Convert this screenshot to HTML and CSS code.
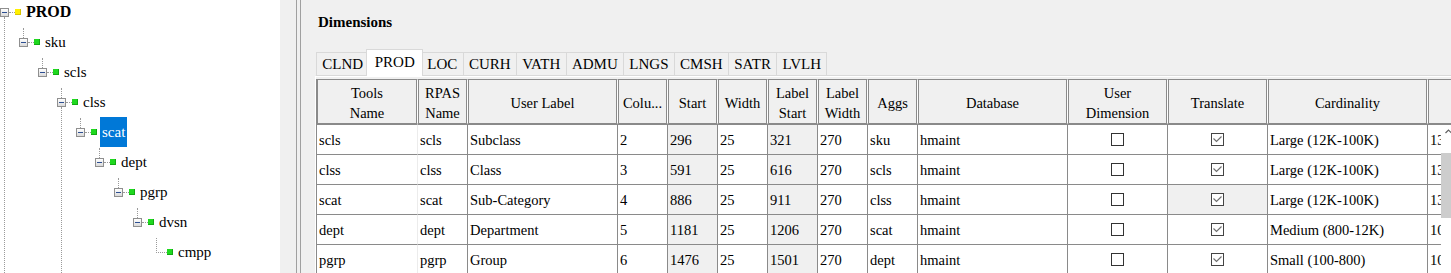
FILE: index.html
```html
<!DOCTYPE html>
<html lang="en">
<head>
  <meta charset="UTF-8" />
  <title>Dimensions</title>
  <link rel="stylesheet" href="styles.css">
</head>
<body>

<div class="tree">
  <div class="node l0 more root"><span class="box"><i></i></span><span class="icon"></span><span class="label">PROD</span></div>
  <div class="node l1"><span class="box"><i></i></span><span class="icon"></span><span class="label">sku</span></div>
  <div class="node l2"><span class="box"><i></i></span><span class="icon"></span><span class="label">scls</span></div>
  <div class="node l3 more"><span class="box"><i></i></span><span class="icon"></span><span class="label">clss</span></div>
  <div class="node l4"><span class="box"><i></i></span><span class="icon"></span><span class="label selected">scat</span></div>
  <div class="node l5"><span class="box"><i></i></span><span class="icon"></span><span class="label">dept</span></div>
  <div class="node l6"><span class="box"><i></i></span><span class="icon"></span><span class="label">pgrp</span></div>
  <div class="node l7"><span class="box"><i></i></span><span class="icon"></span><span class="label">dvsn</span></div>
  <div class="node l8 leaf"><span class="icon"></span><span class="label">cmpp</span></div>
</div>

<div class="main">
  <div class="panel">
    <h3 class="title">Dimensions</h3>

    <div class="tabs">
      <div class="tab">CLND</div>
      <div class="tab active">PROD</div>
      <div class="tab">LOC</div>
      <div class="tab">CURH</div>
      <div class="tab">VATH</div>
      <div class="tab">ADMU</div>
      <div class="tab">LNGS</div>
      <div class="tab">CMSH</div>
      <div class="tab">SATR</div>
      <div class="tab">LVLH</div>
    </div>

    <div class="tab-body">
      <div class="grid">
        <table>
          <colgroup>
            <col class="c-first">
            <col class="c-50">
            <col class="c-150">
            <col class="c-50">
            <col class="c-50">
            <col class="c-50">
            <col class="c-50">
            <col class="c-50">
            <col class="c-50">
            <col class="c-150">
            <col class="c-100">
            <col class="c-100">
            <col class="c-160">
            <col class="c-150">
          </colgroup>
          <thead>
            <tr>
              <th>Tools<br>Name</th>
              <th>RPAS<br>Name</th>
              <th>User Label</th>
              <th>Colu...</th>
              <th>Start</th>
              <th>Width</th>
              <th>Label<br>Start</th>
              <th>Label<br>Width</th>
              <th>Aggs</th>
              <th>Database</th>
              <th>User<br>Dimension</th>
              <th>Translate</th>
              <th>Cardinality</th>
              <th></th>
            </tr>
          </thead>
          <tbody>
            <tr>
              <td>scls</td><td>scls</td><td>Subclass</td><td>2</td>
              <td class="ro">296</td><td>25</td><td class="ro">321</td><td>270</td>
              <td>sku</td><td>hmaint</td>
              <td class="check"><svg width="13" height="13" viewBox="0 0 13 13"><rect x="0.5" y="0.5" width="12" height="12" fill="#fff" stroke="#333"/></svg></td>
              <td class="check"><svg width="13" height="13" viewBox="0 0 13 13"><rect x="0.5" y="0.5" width="12" height="12" fill="#fff" stroke="#444"/><path d="M2.5 5.5L5.5 8.5L10.5 3.5" fill="none" stroke="#707070" stroke-width="1.2"/></svg></td>
              <td>Large (12K-100K)</td><td>1350</td>
            </tr>
            <tr>
              <td>clss</td><td>clss</td><td>Class</td><td>3</td>
              <td class="ro">591</td><td>25</td><td class="ro">616</td><td>270</td>
              <td>scls</td><td>hmaint</td>
              <td class="check"><svg width="13" height="13" viewBox="0 0 13 13"><rect x="0.5" y="0.5" width="12" height="12" fill="#fff" stroke="#333"/></svg></td>
              <td class="check"><svg width="13" height="13" viewBox="0 0 13 13"><rect x="0.5" y="0.5" width="12" height="12" fill="#fff" stroke="#444"/><path d="M2.5 5.5L5.5 8.5L10.5 3.5" fill="none" stroke="#707070" stroke-width="1.2"/></svg></td>
              <td>Large (12K-100K)</td><td>1350</td>
            </tr>
            <tr>
              <td>scat</td><td>scat</td><td>Sub-Category</td><td>4</td>
              <td class="ro">886</td><td>25</td><td class="ro">911</td><td>270</td>
              <td>clss</td><td>hmaint</td>
              <td class="check"><svg width="13" height="13" viewBox="0 0 13 13"><rect x="0.5" y="0.5" width="12" height="12" fill="#fff" stroke="#333"/></svg></td>
              <td class="check ro"><svg width="13" height="13" viewBox="0 0 13 13"><rect x="0.5" y="0.5" width="12" height="12" fill="#fff" stroke="#444"/><path d="M2.5 5.5L5.5 8.5L10.5 3.5" fill="none" stroke="#707070" stroke-width="1.2"/></svg></td>
              <td>Large (12K-100K)</td><td>1350</td>
            </tr>
            <tr>
              <td>dept</td><td>dept</td><td>Department</td><td>5</td>
              <td class="ro">1181</td><td>25</td><td class="ro">1206</td><td>270</td>
              <td>scat</td><td>hmaint</td>
              <td class="check"><svg width="13" height="13" viewBox="0 0 13 13"><rect x="0.5" y="0.5" width="12" height="12" fill="#fff" stroke="#333"/></svg></td>
              <td class="check"><svg width="13" height="13" viewBox="0 0 13 13"><rect x="0.5" y="0.5" width="12" height="12" fill="#fff" stroke="#444"/><path d="M2.5 5.5L5.5 8.5L10.5 3.5" fill="none" stroke="#707070" stroke-width="1.2"/></svg></td>
              <td>Medium (800-12K)</td><td>1050</td>
            </tr>
            <tr>
              <td>pgrp</td><td>pgrp</td><td>Group</td><td>6</td>
              <td class="ro">1476</td><td>25</td><td class="ro">1501</td><td>270</td>
              <td>dept</td><td>hmaint</td>
              <td class="check"><svg width="13" height="13" viewBox="0 0 13 13"><rect x="0.5" y="0.5" width="12" height="12" fill="#fff" stroke="#333"/></svg></td>
              <td class="check"><svg width="13" height="13" viewBox="0 0 13 13"><rect x="0.5" y="0.5" width="12" height="12" fill="#fff" stroke="#444"/><path d="M2.5 5.5L5.5 8.5L10.5 3.5" fill="none" stroke="#707070" stroke-width="1.2"/></svg></td>
              <td>Small (100-800)</td><td>1050</td>
            </tr>
          </tbody>
        </table>

        <div class="vscroll">
          <svg class="arrow" width="10" height="8" viewBox="0 0 10 8"><path d="M4.5 6L7.5 3L10.5 6" fill="none" stroke="#606060" stroke-width="1.2"/></svg>
          <div class="thumb"></div>
        </div>
      </div>
    </div>
  </div>
</div>

</body>
</html>
```

FILE: styles.css
```css
body {
  margin: 0;
  height: 273px;
  overflow: hidden;
  display: flex;
  background-color: #f0f0f0;
  font-family: "Liberation Serif", "Times New Roman", serif;
  color: #000;
}

/* tree */

.tree {
  width: 280px;
  flex: none;
  position: relative;
  overflow: hidden;
  background-color: #fff;
}

.node {
  position: relative;
  height: 30px;
  display: flex;
  align-items: center;
  font-size: 15px;
}

.node:first-child {
  margin-top: -3px;
}

.l1 { padding-left: 19px; }
.l2 { padding-left: 38px; }
.l3 { padding-left: 57px; }
.l4 { padding-left: 76px; }
.l5 { padding-left: 95px; }
.l6 { padding-left: 114px; }
.l7 { padding-left: 133px; }
.l8 { padding-left: 152px; }

.box {
  position: relative;
  width: 9px;
  height: 9px;
  box-sizing: border-box;
  border: 1px solid #8f8f8f;
  background: linear-gradient(#fff, #d9d9d9);
  margin-right: 6px;
  flex: none;
}

.box i {
  position: absolute;
  left: 1px;
  top: 3px;
  width: 5px;
  height: 1px;
  background-color: #2d4f92;
}

/* line up to the parent */
.box::before {
  content: "";
  position: absolute;
  left: 3px;
  top: -11px;
  height: 10px;
  border-left: 1px dotted #9a9a9a;
}

/* line over to the icon */
.box::after {
  content: "";
  position: absolute;
  left: 8px;
  top: 3px;
  width: 6px;
  border-top: 1px dotted #9a9a9a;
}

.l0 .box::before {
  display: none;
}

/* sibling line running down */
.more::after {
  content: "";
  position: absolute;
  left: 4px;
  top: 20px;
  height: 300px;
  border-left: 1px dotted #9a9a9a;
}

.l3.more::after {
  left: 61px;
}

.icon {
  position: relative;
  width: 6px;
  height: 6px;
  flex: none;
  margin-right: 3px;
  background-color: #1fd81f;
  box-shadow: inset -1px -1px #12a812;
}

.root .icon {
  background-color: #ffef00;
  box-shadow: inset -1px -1px #d9c400;
}

.leaf .icon {
  margin-left: 15px;
}

.leaf .icon::before {
  content: "";
  position: absolute;
  left: -11px;
  top: -11px;
  width: 10px;
  height: 14px;
  border-left: 1px dotted #9a9a9a;
  border-bottom: 1px dotted #9a9a9a;
}

.label {
  padding: 0 2px;
  height: 30px;
  line-height: 30px;
  white-space: nowrap;
}

.root .label {
  font-size: 16px;
  font-weight: bold;
}

.label.selected {
  background-color: #0078d7;
  color: #fff;
}

/* right side */

.main {
  flex: 1;
  min-width: 0;
  display: flex;
  margin-left: 16px;
  padding-left: 3px;
  border-left: 1px solid #a0a0a0;
}

.panel {
  flex: 1;
  min-width: 0;
  padding-left: 14px;
  border-left: 1px solid #a0a0a0;
}

.title {
  margin: 14px 0 0 3px;
  font-size: 15px;
  line-height: 17px;
  font-weight: bold;
}

.tabs {
  display: flex;
  align-items: flex-end;
  margin-top: 18px;
  padding-left: 2px;
  height: 26px;
}

.tab {
  height: 22px;
  display: flex;
  align-items: center;
  padding: 0 5.3px;
  margin-left: -1px;
  font-size: 15px;
  border: 1px solid #d9d9d9;
  border-bottom: none;
  background-color: #f0f0f0;
}

.tab.active {
  position: relative;
  z-index: 1;
  box-sizing: border-box;
  height: 27px;
  padding: 0 7.3px 1px;
  margin: 0 -2px -1px -3px;
  background-color: #fff;
}

.tab.active + .tab {
  margin-left: 0;
}

.tab-body {
  border-top: 1px solid #d9d9d9;
  border-left: 1px solid #fff;
  box-shadow: inset 0 1px #fff;
  padding-top: 3px;
}

/* grid */

.grid {
  position: relative;
  height: 194px;
  overflow: hidden;
}

table {
  border-collapse: separate;
  border-spacing: 0;
  table-layout: fixed;
  width: 1262px;
  font-size: 14.5px;
}

.c-first { width: 102px; }
.c-50 { width: 50px; }
.c-100 { width: 100px; }
.c-150 { width: 150px; }
.c-160 { width: 160px; }

th, td {
  box-sizing: border-box;
  white-space: nowrap;
  overflow: hidden;
}

th {
  height: 45px;
  padding: 3px 2px 0;
  font-weight: normal;
  line-height: 20px;
  background-color: #f0f0f0;
  border-top: 1px solid #8a8a8a;
  border-bottom: 1px solid #8a8a8a;
  border-right: 1px solid #fff;
  box-shadow: inset 1px 0 #8a8a8a, inset -1px 0 #8a8a8a;
}

th:first-child {
  border-left: 1px solid #8a8a8a;
}

td {
  height: 30px;
  padding: 2px 2px 0;
  background-color: #fff;
  border-top: 1px solid #8a8a8a;
  border-right: 1px solid #8a8a8a;
}

td:first-child {
  border-left: 1px solid #8a8a8a;
  border-right-color: #ececec;
}

td.ro {
  background-color: #f0f0f0;
}

td.check {
  text-align: center;
  padding-top: 0;
}

td.check svg {
  display: block;
  margin: 0 auto;
}

.vscroll {
  position: absolute;
  top: 46px;
  right: 0;
  bottom: 0;
  width: 10px;
  background-color: #fff;
}

.arrow {
  display: block;
  margin-top: 2px;
}

.thumb {
  margin-top: 18px;
  height: 65px;
  background-color: #cdcdcd;
}
```
